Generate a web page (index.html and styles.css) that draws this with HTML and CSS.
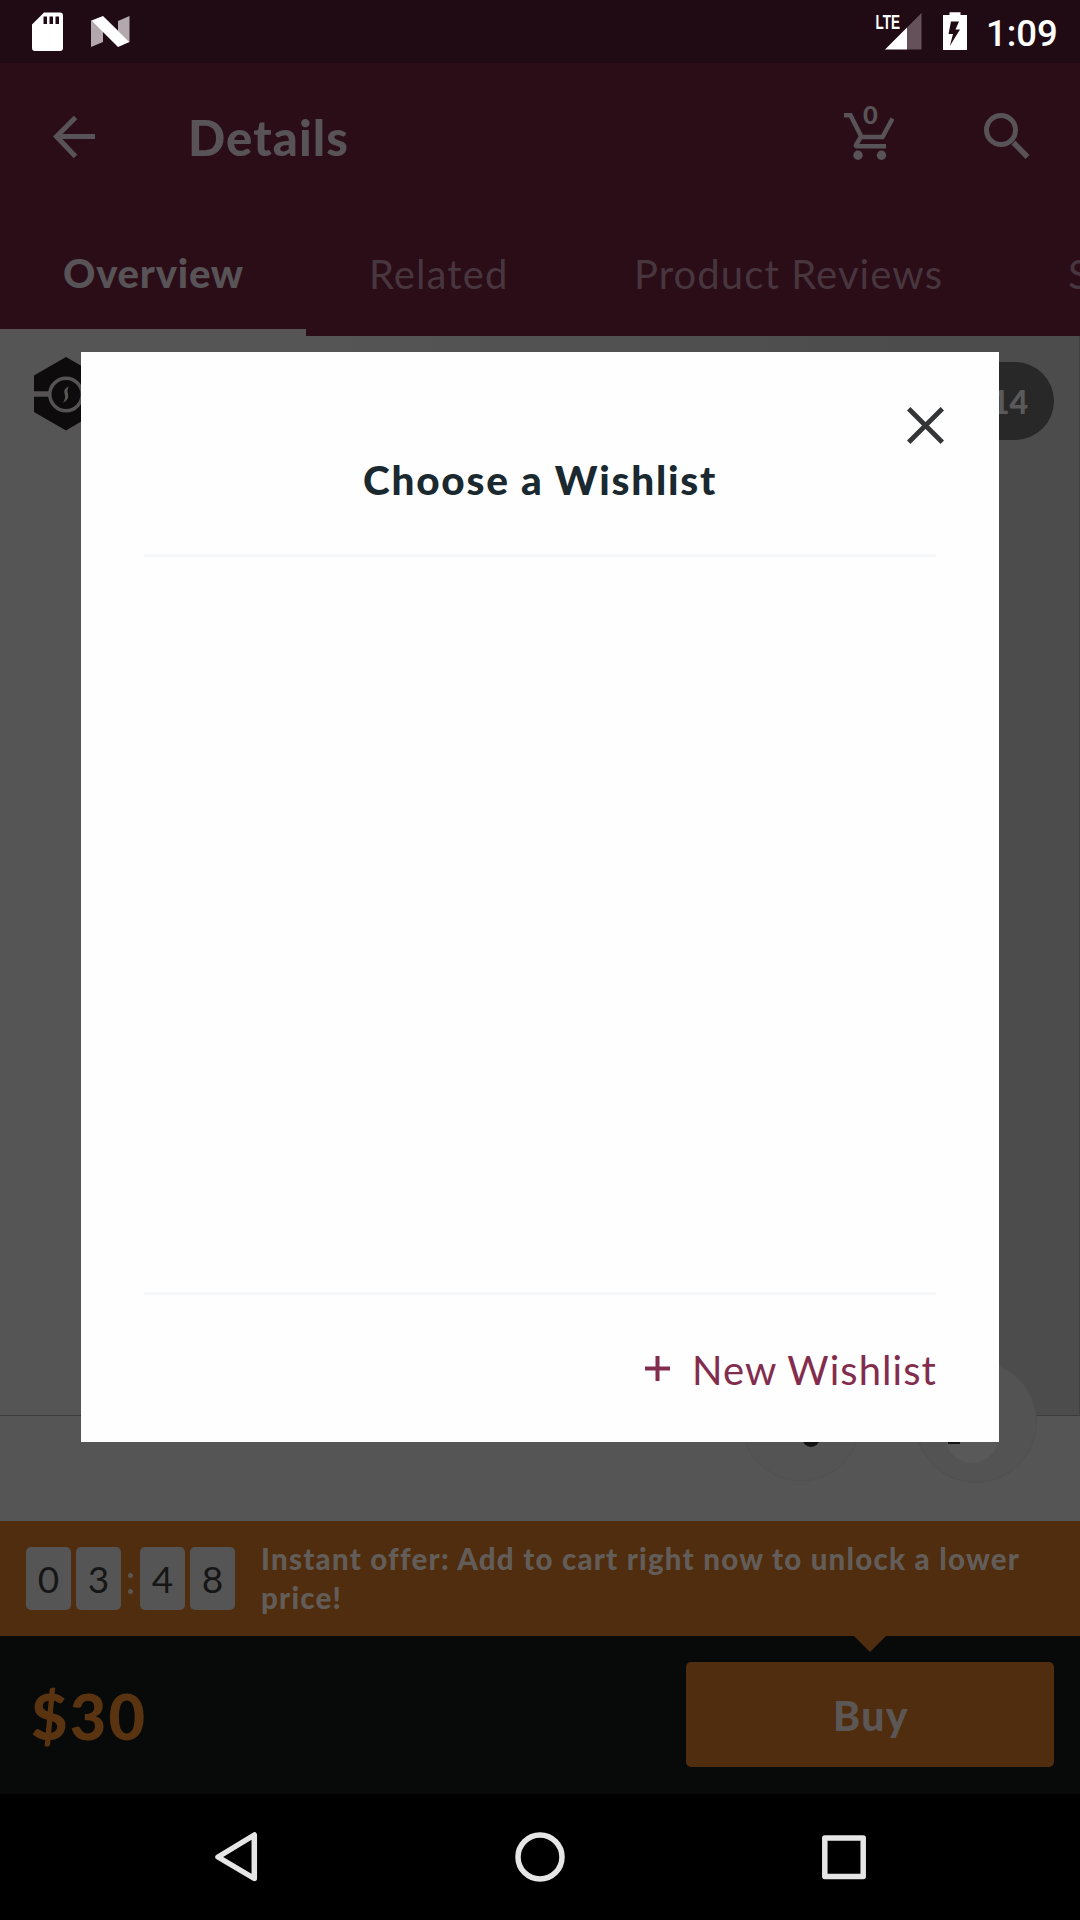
FILE: index.html
```html
<!DOCTYPE html>
<html lang="en">
<head>
<meta charset="utf-8">
<title>Details</title>
<link rel="stylesheet" href="styles.css">
</head>
<body>
<div class="screen">
  <header class="status">
    <svg width="140" height="63" viewBox="0 0 140 63">
      <path fill="#fff" fill-rule="evenodd" d="M44 12.500h16a3 3 0 0 1 3 3V48a3 3 0 0 1-3 3H35a3 3 0 0 1-3-3V24.500zM43.500 16.500V24h3.500v-7.500zM49.500 16.500V24H53v-7.500zM55.500 16.500V24H59v-7.500z"/>
      <path fill="#b3a8ad" d="M91 20l12 10v12l-12 5zM118 21l11.500-5v26L118 31z"/>
      <path fill="#fff" d="M91.500 20.500L103 16l26.500 26L118 47z"/>
    </svg>
    <div class="status-right">
      <svg width="96" height="63" viewBox="872 0 96 63">
        <path fill="#645159" d="M907 27.500L921.500 13v36.500H907z"/>
        <path fill="#fff" d="M885 49.500l22-22v22z"/>
        <path fill="#fff" fill-rule="evenodd" d="M949.500 12.300h11v2.700h6.500v35h-24V15h6.500zM951 21.500l-2.500 12.500h4.500L949.800 46 960 29.500h-4.500l3.500-8z"/>
        <text class="lte" x="875.500" y="29" textLength="24.500" lengthAdjust="spacingAndGlyphs">LTE</text>
      </svg>
      <span class="clock">1:09</span>
    </div>
  </header>

  <nav class="appbar">
    <svg class="back" width="42" height="42" viewBox="0 0 42 42" fill="none" stroke="#585356" stroke-width="5"><path d="M42 20.500H4M22.500 1.500L3.500 20.500l19 20"/></svg>
    <h1 class="title">Details</h1>
    <div class="cart">
      <span class="cart-count">0</span>
      <svg width="50" height="54" viewBox="0 0 50 54">
        <path fill="none" stroke="#585356" stroke-width="4.500" d="M0 9.300h6.500L17.500 31h21L48.500 12.500M16.500 31.500l-4.500 7.500q-.5 1.300 1 1.300H42"/>
        <circle cx="14" cy="49.300" r="4.700" fill="#585356"/><circle cx="37.500" cy="49.300" r="4.700" fill="#585356"/>
      </svg>
    </div>
    <svg class="search" width="46" height="46" viewBox="0 0 46 46" fill="none" stroke="#585356"><circle cx="17" cy="17" r="14.500" stroke-width="5"/><path stroke-width="5.500" d="M29.500 29.500L43.500 44"/></svg>
  </nav>

  <div class="tabs">
    <div class="tab tab-active">Overview</div>
    <div class="tab tab-related">Related</div>
    <div class="tab tab-reviews">Product Reviews</div>
    <div class="tab">S</div>
  </div>

  <main class="product">
    <div class="photo">
      <svg width="64" height="74" viewBox="0 0 64 74">
        <path fill="#0d0b0b" d="M32 0l32 18.500v36L32 73.500 0 55V18.500z"/>
        <path stroke="#575354" stroke-width="5.500" d="M0 37h16"/>
        <circle cx="32" cy="37.500" r="16.200" fill="#0d0b0b" stroke="#575354" stroke-width="3.500"/>
        <path fill="#5b5757" d="M35 29.500q-6 2-4.500 7 2 5-2 9.500 7-3 5.500-9-1.500-4 1-7.500z"/>
      </svg>
      <span class="counter">14</span>
    </div>
    <svg class="fabs" width="340" height="140" viewBox="740 1350 340 140">
      <circle cx="801" cy="1422" r="59" fill="#545454" stroke="#515151"/>
      <circle cx="976" cy="1422" r="60.500" fill="#535353" stroke="#505050"/>
      <circle cx="811" cy="1438.500" r="8.500" fill="#111"/>
      <circle cx="972" cy="1436" r="27" fill="#595959"/>
      <path fill="#141414" d="M948 1430h12v14h-12z"/>
    </svg>
  </main>

  <section class="offer">
    <div class="timer">
      <span class="digit">0</span><span class="digit">3</span><span class="colon"><i></i><i></i></span><span class="digit">4</span><span class="digit">8</span>
    </div>
    <p class="offer-text">Instant offer: Add to cart right now to unlock a lower<br>price!</p>
    <svg class="pointer" width="34" height="17" viewBox="0 0 34 17"><path fill="#4f2d0e" d="M0 0h34L17 17z"/></svg>
  </section>

  <section class="buybar">
    <span class="price">$30</span>
    <div class="buy">Buy</div>
  </section>

  <footer class="navbar">
    <svg width="1080" height="126" viewBox="0 1794 1080 126" fill="none" stroke="#e6e6e6" stroke-width="5.500" stroke-linejoin="round">
      <path d="M254.300 1835v43.500L218 1857z"/>
      <circle cx="540" cy="1857" r="22"/>
      <path d="M824.800 1838h38.400v38.400h-38.400z"/>
    </svg>
  </footer>

  <div class="modal">
    <svg class="close" width="37" height="37" viewBox="0 0 37 37" stroke="#343536" stroke-width="4.800"><path d="M1.700 1.700l33.600 33.600M35.300 1.700L1.700 35.300"/></svg>
    <h2 class="modal-title">Choose a Wishlist</h2>
    <div class="list"></div>
    <div class="modal-action">
      <svg width="25" height="25" viewBox="0 0 25 25" stroke="#832d4e" stroke-width="4"><path d="M0 12.500h25M12.500 0v25"/></svg>
      <span>New Wishlist</span>
    </div>
  </div>
</div>
</body>
</html>
```
FILE: styles.css
```css
* { box-sizing: border-box; margin: 0; padding: 0; }
body { background: #000; font-family: Lato, "Liberation Sans", sans-serif; }
svg { display: block; flex: none; }
.screen { position: relative; width: 1080px; height: 1920px; overflow: hidden; display: flex; flex-direction: column; }

.status { height: 63px; background: #200a13; display: flex; justify-content: space-between; }
.status-right { display: flex; width: 208px; }
.clock { margin-left: 18px; font: 500 36.5px/67px Roboto, sans-serif; color: #fff; }
.lte { font: 700 21px "Liberation Sans", sans-serif; fill: #fff; }

.appbar { height: 147px; background: #2b0d18; display: flex; align-items: flex-start; color: #585356; }
.back { margin: 53px 0 0 53px; }
.title { margin: 45px 0 0 93px; width: 652px; font-size: 49px; line-height: 58px; font-weight: 900; letter-spacing: 1.080px; }
.cart { position: relative; margin: 43px 90px 0 4px; width: 50px; }
.cart-count { position: absolute; left: 19px; top: -6px; font-size: 25.500px; line-height: 28px; font-weight: 900; }
.search { margin-top: 50px; }

.tabs { height: 126px; background: #2b0d18; display: flex; overflow: hidden; font-size: 40px; line-height: 129px; color: #48363e; white-space: nowrap; letter-spacing: 1.100px; }
.tab { flex: none; padding-left: 63px; }
.tab-active { width: 306px; font-weight: 900; letter-spacing: .770px; line-height: 127px; color: #585356; border-bottom: 7px solid #575456; }
.tab-related { width: 265px; }
.tab-reviews { width: 434px; }

.product { height: 1185px; background: #555; position: relative; }
.photo { height: 1080px; display: flex; justify-content: space-between; align-items: flex-start; padding: 21px 25px 0 33.5px; background: linear-gradient(90deg, #555 0 30%, #4c4c4c 85% 100%); border-bottom: 1px solid #3c3c3c; border-right: 1px solid #414141; }
.counter { margin-top: 5px; width: 130px; height: 78px; padding-right: 26px; border-radius: 39px; background: #282828; color: #5a5a5a; font-size: 32px; line-height: 79px; font-weight: 900; text-align: right; }
.fabs { position: absolute; right: 0; top: 1014px; }

.offer { position: relative; height: 115px; background: #4f2d0e; display: flex; padding: 26px 0 0 26px; }
.timer { display: flex; width: 235px; gap: 5px; }
.digit { width: 45px; height: 63px; border-radius: 5px; background: #555; color: #161616; font-size: 37px; line-height: 64px; text-align: center; }
.colon { width: 9px; display: flex; flex-direction: column; align-items: center; gap: 11px; padding-top: 26px; }
.colon i { width: 5px; height: 5px; border-radius: 50%; background: #5b5653; }
.offer-text { font-size: 29.5px; line-height: 39px; font-weight: 900; letter-spacing: 1.230px; color: #635d5a; margin-top: -8px; white-space: nowrap; }
.pointer { position: absolute; left: 853px; top: 114px; }

.buybar { height: 158px; background: #080a0a; display: flex; justify-content: space-between; padding: 26px 26px 0 31px; }
.price { font-size: 63px; line-height: 108px; font-weight: 900; letter-spacing: 2.200px; color: #5a3410; }
.buy { width: 368px; height: 105px; padding-left: 2px; border-radius: 5px; background: #4f2d0e; color: #5c5654; font-size: 41px; line-height: 107px; font-weight: 900; letter-spacing: 1.400px; text-align: center; }
.navbar { height: 126px; background: #000; }

.modal { position: absolute; left: 81px; top: 352px; width: 918px; height: 1090px; background: #fefefe; padding: 55px 63px 0; display: flex; flex-direction: column; }
.close { align-self: flex-end; margin-right: -8px; }
.modal-title { height: 110px; padding-top: 7px; font-size: 40.500px; line-height: 58px; font-weight: 900; letter-spacing: 1.770px; color: #1a282f; text-align: center; }
.list { height: 741px; border-top: 3px solid #f6f7f8; border-bottom: 3px solid #f6f7f8; }
.modal-action { height: 147px; display: flex; justify-content: flex-end; gap: 22px; color: #832d4e; font-size: 40px; line-height: 150px; letter-spacing: 1.050px; margin-right: -1px; }
.modal-action svg { margin-top: 60.500px; }
```
